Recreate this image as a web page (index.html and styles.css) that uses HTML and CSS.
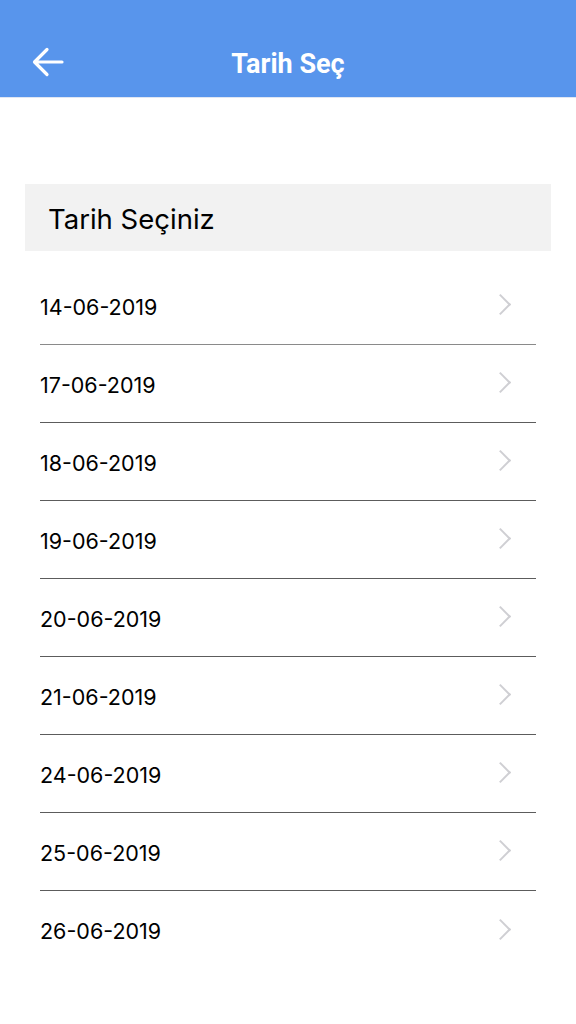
FILE: index.html
```html
<!DOCTYPE html>
<html lang="tr">
<head>
<meta charset="utf-8">
<link rel="stylesheet" href="styles.css">
</head>
<body>
<header class="nav">
  <button class="back" aria-label="Geri">
    <svg width="32" height="30" viewBox="0 0 32 30"><path d="M30 15H3M15 2.5L2.5 15L15 27.5" fill="none" stroke="#fff" stroke-width="3.2" stroke-linecap="round" stroke-linejoin="round"/></svg>
  </button>
  <h1 class="title">Tarih Seç</h1>
</header>
<main class="content">
  <div class="section-head">Tarih Seçiniz</div>
  <ul class="list">
    <li class="row"><span>14-06-2019</span><i class="chev"></i></li>
    <li class="row"><span>17-06-2019</span><i class="chev"></i></li>
    <li class="row"><span>18-06-2019</span><i class="chev"></i></li>
    <li class="row"><span>19-06-2019</span><i class="chev"></i></li>
    <li class="row"><span>20-06-2019</span><i class="chev"></i></li>
    <li class="row"><span>21-06-2019</span><i class="chev"></i></li>
    <li class="row"><span>24-06-2019</span><i class="chev"></i></li>
    <li class="row"><span>25-06-2019</span><i class="chev"></i></li>
    <li class="row last"><span>26-06-2019</span><i class="chev"></i></li>
  </ul>
</main>
</body>
</html>
```
FILE: styles.css
```css
* { box-sizing: border-box; }
html, body { margin: 0; padding: 0; background: #fff; }
body { width: 576px; height: 1024px; overflow: hidden; font-family: Inter, "Liberation Sans", sans-serif; color: #000; }

.nav {
  height: 98px;
  background: #5895ec;
  border-bottom: 1px solid #dfe6f3;
  display: flex;
  align-items: center;
  justify-content: center;
  position: relative;
  padding-top: 32px;
}
.back {
  position: absolute;
  left: 32px;
  top: 47px;
  background: none;
  border: 0;
  padding: 0;
  width: 32px;
  height: 30px;
  display: block;
}
.back svg { display: block; }
.title {
  margin: 0;
  font-family: Roboto, "Liberation Sans", sans-serif;
  font-weight: 700;
  font-size: 27px;
  color: #fff;
  line-height: 1;
}

.content { padding: 86px 25px 0; }
.section-head {
  height: 67px;
  background: #f2f2f2;
  display: flex;
  align-items: center;
  padding-left: 23px;
  font-size: 27.5px;
  padding-top: 2px;
}
.list {
  list-style: none;
  margin: 16px 0 0;
  padding: 0 15px;
}
.row {
  height: 78px;
  border-bottom: 1px solid #5c5c5c;
  display: flex;
  align-items: center;
  justify-content: space-between;
  font-size: 21.5px;
  padding-right: 28px;
  padding-top: 2px;
}
.row:first-child { border-bottom-color: #8a8a8a; }
.row.last { border-bottom: 0; }
.chev {
  width: 15px;
  height: 15px;
  border-top: 2.5px solid #cfcfd3;
  border-right: 2.5px solid #cfcfd3;
  transform: rotate(45deg);
  margin-top: -4px;
}
```
